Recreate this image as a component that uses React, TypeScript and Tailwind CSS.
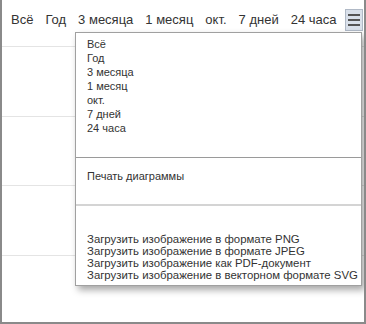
import React from 'react';

const ranges = ['Всё', 'Год', '3 месяца', '1 месяц', 'окт.', '7 дней', '24 часа'];

const downloads = [
  'Загрузить изображение в формате PNG',
  'Загрузить изображение в формате JPEG',
  'Загрузить изображение как PDF-документ',
  'Загрузить изображение в векторном формате SVG',
];

export default function App() {
  return (
    <div
      className="relative w-[366px] h-[324px] overflow-hidden bg-white border-l-2 border-r-2 border-b-2 border-[#8a8a8a] text-[#333]"
      style={{ fontFamily: '"Liberation Sans", Arial, sans-serif' }}
    >
      {/* range selector */}
      <div className="flex items-center h-[38px] pl-[9px] pr-[1px]">
        <div className="flex items-center gap-[12px] text-[13px] pt-[1px]">
          {ranges.map((r) => (
            <span key={r} className="whitespace-nowrap">
              {r}
            </span>
          ))}
        </div>
        <button className="ml-auto w-[18px] h-[22px] mt-[1px] bg-[#d9e0ea] border border-[#b0b9c6] flex flex-col items-center justify-center gap-[3px]">
          <span className="block w-[12px] h-[2px] bg-[#555]" />
          <span className="block w-[12px] h-[2px] bg-[#555]" />
          <span className="block w-[12px] h-[2px] bg-[#555]" />
        </button>
      </div>

      {/* chart grid */}
      <div className="pt-[8px]">
        <div className="border-t border-[#e4e4e4] h-[70px]" />
        <div className="border-t border-[#e4e4e4] h-[69px]" />
        <div className="border-t border-[#e4e4e4] h-[70px]" />
        <div className="border-t border-[#e4e4e4] h-[69px]" />
      </div>

      {/* export menu */}
      <div className="absolute left-[73px] top-[32px] w-[287px] bg-white border border-[#a0a0a0] shadow-[3px_4px_7px_rgba(0,0,0,0.35)] text-[11px]">
        <div className="pt-[4px] pb-[22px] pl-[11px] leading-[14px]">
          {ranges.map((r) => (
            <div key={r}>{r}</div>
          ))}
        </div>
        <div className="border-t border-[#9a9a9a]" />
        <div className="pt-[11px] pb-[21px] pl-[11px] leading-[14px]">Печать диаграммы</div>
        <div className="border-t-2 border-[#d4d4d4]" />
        <div className="pt-[27px] pb-[4px] pl-[11px] leading-[12px] text-[11.4px]">
          {downloads.map((d) => (
            <div key={d} className="whitespace-nowrap">
              {d}
            </div>
          ))}
        </div>
      </div>
    </div>
  );
}
